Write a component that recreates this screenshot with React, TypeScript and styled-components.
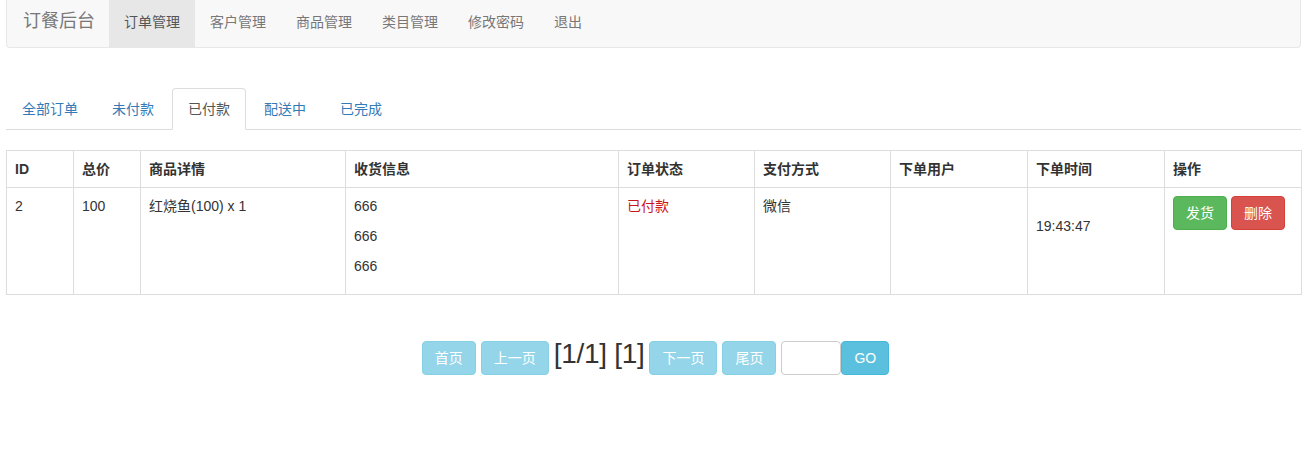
import React from "react";
import styled, { createGlobalStyle } from "styled-components";

const Global = createGlobalStyle`
  html, body { margin: 0; padding: 0; background: #fff; }
  body {
    font-family: "Liberation Sans", "Noto Sans CJK SC", sans-serif;
    font-size: 14px;
    line-height: 20px;
    color: #333;
  }
  * { box-sizing: border-box; }
`;

const Page = styled.div`
  padding: 0 9px 0 6px;
`;

const Navbar = styled.nav`
  display: flex;
  align-items: stretch;
  height: 48px;
  background: #f8f8f8;
  border: 1px solid #e7e7e7;
  border-top: none;
  border-radius: 0 0 4px 4px;
  margin-bottom: 40px;
`;

const Brand = styled.a`
  display: block;
  padding: 11px 14px 0 16px;
  font-size: 18px;
  line-height: 20px;
  color: #777;
  text-decoration: none;
`;

const NavLink = styled.a<{ $active?: boolean }>`
  display: block;
  padding: 12px 15px 0;
  line-height: 20px;
  color: ${(p) => (p.$active ? "#555" : "#777")};
  background: ${(p) => (p.$active ? "#e7e7e7" : "transparent")};
  text-decoration: none;
`;

const Tabs = styled.ul`
  display: flex;
  list-style: none;
  margin: 0 0 20px;
  padding: 0;
  border-bottom: 1px solid #ddd;
`;

const Tab = styled.li<{ $active?: boolean }>`
  margin-right: 2px;
  margin-bottom: -1px;
  padding: 10px 15px;
  line-height: 20px;
  border: 1px solid ${(p) => (p.$active ? "#ddd" : "transparent")};
  border-bottom-color: ${(p) => (p.$active ? "#fff" : "transparent")};
  border-radius: 4px 4px 0 0;
  background: ${(p) => (p.$active ? "#fff" : "transparent")};
  color: ${(p) => (p.$active ? "#555" : "#337ab7")};
`;

const Table = styled.table`
  width: 100%;
  border-collapse: collapse;
  table-layout: fixed;
  border: 1px solid #ddd;
  margin-bottom: 44px;
`;

const Th = styled.th`
  text-align: left;
  font-weight: bold;
  padding: 8px;
  line-height: 20px;
  border: 1px solid #ddd;
`;

const Td = styled.td`
  vertical-align: top;
  padding: 8px;
  line-height: 20px;
  border: 1px solid #ddd;
`;

const Para = styled.p`
  margin: 0 0 10px;
`;

const Status = styled.span`
  color: #c9161e;
`;

const ActionBtn = styled.button<{ $variant: "success" | "danger" }>`
  font-family: inherit;
  font-size: 14px;
  line-height: 20px;
  padding: 6px 12px;
  border-radius: 4px;
  color: #fff;
  border: 1px solid ${(p) => (p.$variant === "success" ? "#4cae4c" : "#d43f3a")};
  background: ${(p) => (p.$variant === "success" ? "#5cb85c" : "#d9534f")};
  margin-right: 4px;
`;

const Pager = styled.div`
  display: flex;
  justify-content: center;
  align-items: baseline;
  gap: 5px;
  padding-left: 4px;
`;

const PageBtn = styled.button<{ $disabled?: boolean }>`
  font-family: inherit;
  font-size: 14px;
  line-height: 20px;
  padding: 6px 12px;
  border-radius: 4px;
  color: #fff;
  background: #5bc0de;
  border: 1px solid #46b8da;
  opacity: ${(p) => (p.$disabled ? 0.65 : 1)};
`;

const PageInfo = styled.span`
  font-size: 28px;
  line-height: 30px;
  color: #333;
  letter-spacing: -0.3px;
`;

const GoGroup = styled.span`
  display: inline-flex;
  align-items: baseline;
`;

const PageInput = styled.input`
  width: 60px;
  height: 34px;
  border: 1px solid #ccc;
  border-radius: 4px;
  font-family: inherit;
  font-size: 14px;
  padding: 6px;
`;

const GoBtn = styled(PageBtn)`
  padding: 6px 12px;
`;

const cols = [67, 67, 205, 273, 136, 136, 137, 137, 137];
const headers = ["ID", "总价", "商品详情", "收货信息", "订单状态", "支付方式", "下单用户", "下单时间", "操作"];

export default function App() {
  return (
    <Page>
      <Global />
      <Navbar>
        <Brand>订餐后台</Brand>
        <NavLink $active>订单管理</NavLink>
        <NavLink>客户管理</NavLink>
        <NavLink>商品管理</NavLink>
        <NavLink>类目管理</NavLink>
        <NavLink>修改密码</NavLink>
        <NavLink>退出</NavLink>
      </Navbar>
      <Tabs>
        <Tab>全部订单</Tab>
        <Tab>未付款</Tab>
        <Tab $active>已付款</Tab>
        <Tab>配送中</Tab>
        <Tab>已完成</Tab>
      </Tabs>
      <Table>
        <colgroup>
          {cols.map((w, i) => (
            <col key={i} style={{ width: w }} />
          ))}
        </colgroup>
        <thead>
          <tr>
            {headers.map((h) => (
              <Th key={h}>{h}</Th>
            ))}
          </tr>
        </thead>
        <tbody>
          <tr>
            <Td>2</Td>
            <Td>100</Td>
            <Td>红烧鱼(100) x 1</Td>
            <Td>
              <Para>666</Para>
              <Para>666</Para>
              <Para>666</Para>
            </Td>
            <Td>
              <Status>已付款</Status>
            </Td>
            <Td>微信</Td>
            <Td></Td>
            <Td>
              &nbsp;
              <br />
              19:43:47
            </Td>
            <Td>
              <ActionBtn $variant="success">发货</ActionBtn>
              <ActionBtn $variant="danger">删除</ActionBtn>
            </Td>
          </tr>
        </tbody>
      </Table>
      <Pager>
        <PageBtn $disabled>首页</PageBtn>
        <PageBtn $disabled>上一页</PageBtn>
        <PageInfo>[1/1] [1]</PageInfo>
        <PageBtn $disabled>下一页</PageBtn>
        <PageBtn $disabled>尾页</PageBtn>
        <GoGroup>
          <PageInput />
          <GoBtn>GO</GoBtn>
        </GoGroup>
      </Pager>
    </Page>
  );
}
